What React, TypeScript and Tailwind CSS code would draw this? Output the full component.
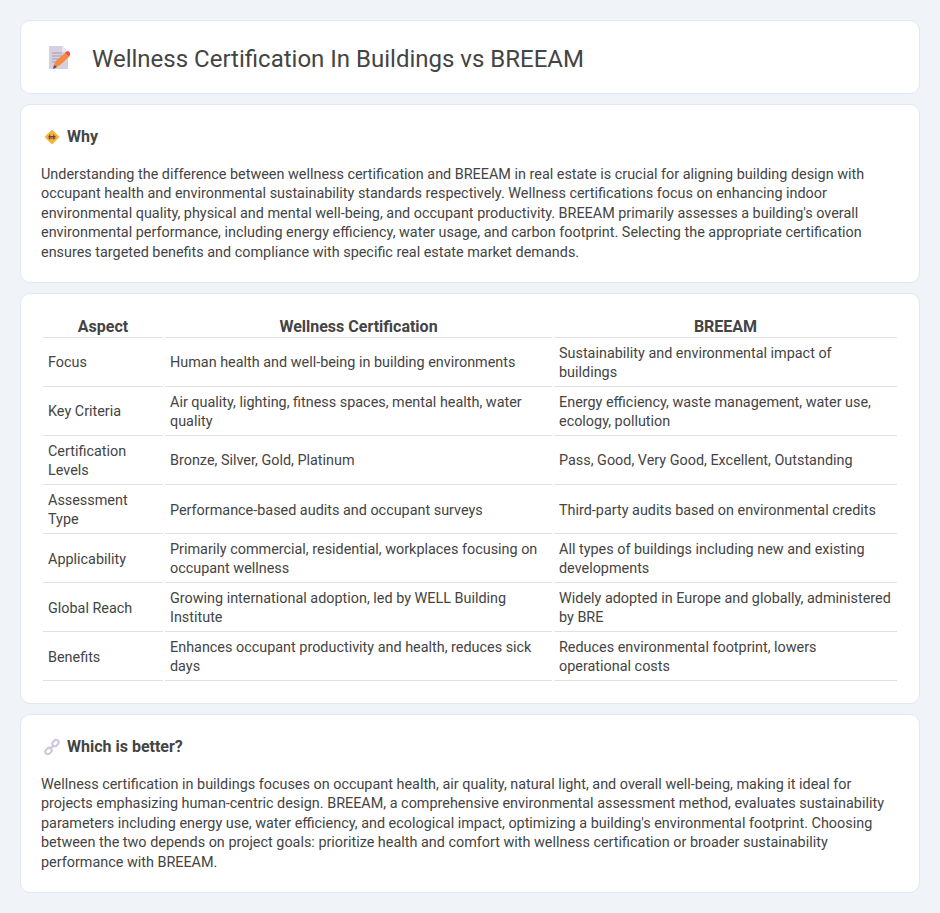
const rows = [
  ['Focus', 'Human health and well-being in building environments', 'Sustainability and environmental impact of buildings'],
  ['Key Criteria', 'Air quality, lighting, fitness spaces, mental health, water quality', 'Energy efficiency, waste management, water use, ecology, pollution'],
  ['Certification Levels', 'Bronze, Silver, Gold, Platinum', 'Pass, Good, Very Good, Excellent, Outstanding'],
  ['Assessment Type', 'Performance-based audits and occupant surveys', 'Third-party audits based on environmental credits'],
  ['Applicability', 'Primarily commercial, residential, workplaces focusing on occupant wellness', 'All types of buildings including new and existing developments'],
  ['Global Reach', 'Growing international adoption, led by WELL Building Institute', 'Widely adopted in Europe and globally, administered by BRE'],
  ['Benefits', 'Enhances occupant productivity and health, reduces sick days', 'Reduces environmental footprint, lowers operational costs'],
];

function MemoIcon() {
  return (
    <svg width="24" height="24" viewBox="0 0 24 24" className="shrink-0 mt-[2px]">
      <path d="M2 0h13l6 6v17l-1 0H2z" fill="#d6cfe0" />
      <path d="M15 0l6 6h-6z" fill="#eae6f0" />
      <path d="M5 7h10M5 10h12M5 13h9M5 16h5" stroke="#a39bb0" strokeWidth="1" />
      <path d="M7 19l2-4 9-8 4 4-9 8-4 2z" fill="#f58a3c" />
      <path d="M18 7l1.500-1.500a1.500 1.500 0 0 1 2.200 0l1.300 1.300v2L22 11z" fill="#f0524a" />
      <path d="M6 23l1-4 3 2z" fill="#5b4a44" />
    </svg>
  );
}

function DiamondIcon() {
  return (
    <svg width="16" height="16" viewBox="0 0 16 16" className="shrink-0">
      <rect x="2.600" y="2.600" width="10.800" height="10.800" rx="1.500" transform="rotate(45 8 8)" fill="#fbb040" />
      <path d="M5.800 5.500v5M9.800 5.500v5M4.500 7.500h7M4.500 9h7" stroke="#5a4a3c" strokeWidth="1" fill="none" />
    </svg>
  );
}

function LinkIcon() {
  return (
    <svg width="16" height="16" viewBox="0 0 16 16" className="shrink-0">
      <g fill="none" stroke="#cfc6dc" strokeWidth="2">
        <rect x="8" y="1.500" width="7" height="5" rx="2.500" transform="rotate(-45 11.500 4)" />
        <rect x="1" y="9.500" width="7" height="5" rx="2.500" transform="rotate(-45 4.500 12)" />
        <path d="M6 10l4-4" />
      </g>
    </svg>
  );
}

export default function App() {
  return (
    <div className="min-h-[913px] bg-[#f0f4f8] p-5 font-['Roboto',sans-serif] text-[14.4px] leading-[19.440px] text-[#444] flex flex-col gap-2.5">
      <header className="h-[74px] bg-white border border-[#e2e8f0] rounded-[10px] flex items-center pl-[26px] gap-[21px]">
        <MemoIcon />
        <h1 className="text-[24px] font-normal text-[#444] pt-[6px]">Wellness Certification In Buildings vs BREEAM</h1>
      </header>

      <section className="h-[179px] bg-white border border-[#e2e8f0] rounded-[10px] pt-[21px] px-5">
        <h2 className="flex items-center gap-[7px] font-bold text-[16px] pl-[3px] h-[22px]">
          <DiamondIcon />
          Why
        </h2>
        <p className="mt-[17px]">
          Understanding the difference between wellness certification and BREEAM in real estate is crucial for aligning building design with occupant health and environmental sustainability standards respectively. Wellness certifications focus on enhancing indoor environmental quality, physical and mental well-being, and occupant productivity. BREEAM primarily assesses a building's overall environmental performance, including energy efficiency, water usage, and carbon footprint. Selecting the appropriate certification ensures targeted benefits and compliance with specific real estate market demands.
        </p>
      </section>

      <section className="h-[411px] bg-white border border-[#e2e8f0] rounded-[10px] pt-[21px] px-5">
        <table className="w-full border-separate border-spacing-[2px]">
          <thead>
            <tr>
              <th className="w-[120px] font-bold text-[16px] text-center border-b border-[#e0e0e0] leading-[19px] pb-[1px]">Aspect</th>
              <th className="w-[387px] font-bold text-[16px] text-center border-b border-[#e0e0e0] leading-[19px] pb-[1px]">Wellness Certification</th>
              <th className="font-bold text-[16px] text-center border-b border-[#e0e0e0] leading-[19px] pb-[1px]">BREEAM</th>
            </tr>
          </thead>
          <tbody>
            {rows.map((r) => (
              <tr key={r[0]}>
                {r.map((c, i) => (
                  <td key={i} className="px-[5px] py-[3.600px] border-b border-[#e0e0e0] align-middle">{c}</td>
                ))}
              </tr>
            ))}
          </tbody>
        </table>
      </section>

      <section className="h-[179px] bg-white border border-[#e2e8f0] rounded-[10px] pt-[21px] px-5">
        <h2 className="flex items-center gap-[7px] font-bold text-[16px] pl-[3px] h-[22px]">
          <LinkIcon />
          Which is better?
        </h2>
        <p className="mt-[17px]">
          Wellness certification in buildings focuses on occupant health, air quality, natural light, and overall well-being, making it ideal for projects emphasizing human-centric design. BREEAM, a comprehensive environmental assessment method, evaluates sustainability parameters including energy use, water efficiency, and ecological impact, optimizing a building's environmental footprint. Choosing between the two depends on project goals: prioritize health and comfort with wellness certification or broader sustainability performance with BREEAM.
        </p>
      </section>
    </div>
  );
}
